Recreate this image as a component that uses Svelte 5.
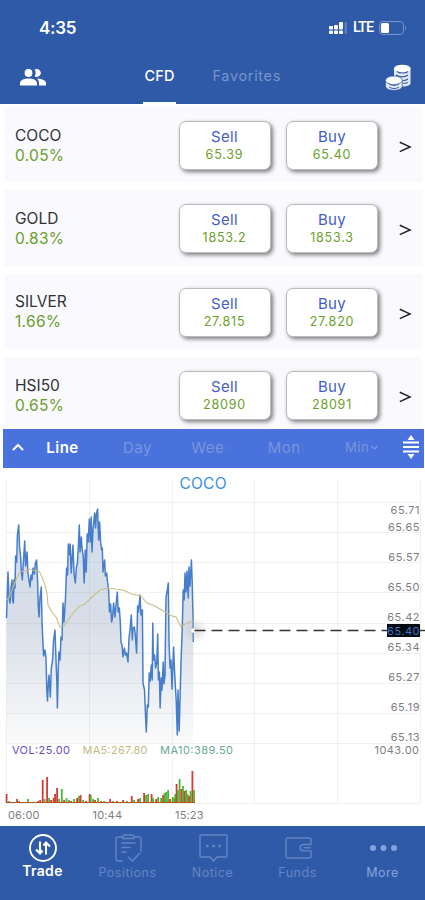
<script lang="ts">
  type Quote = { symbol: string; change: string; sell: string; buy: string };

  const quotes: Quote[] = [
    { symbol: 'COCO', change: '0.05%', sell: '65.39', buy: '65.40' },
    { symbol: 'GOLD', change: '0.83%', sell: '1853.2', buy: '1853.3' },
    { symbol: 'SILVER', change: '1.66%', sell: '27.815', buy: '27.820' },
    { symbol: 'HSI50', change: '0.65%', sell: '28090', buy: '28091' },
  ];

  const gridX = [6.5, 89.5, 172.5, 254.5, 337.5, 420.5];
  const gridY = [502.5, 532.5, 562.5, 592.5, 623.5, 653.5, 683.5, 713.5, 743.5, 803.5];

  const priceLabels = [
    { y: 513.5, text: '65.71' },
    { y: 530.5, text: '65.65' },
    { y: 560.5, text: '65.57' },
    { y: 590.5, text: '65.50' },
    { y: 620.5, text: '65.42' },
    { y: 650.5, text: '65.34' },
    { y: 680.5, text: '65.27' },
    { y: 710.5, text: '65.19' },
    { y: 740.5, text: '65.13' },
  ];

  const price =
    '6.5,618 8,572 9,598 10,603 11,588 12,580 12.6,600 13.4,603 14,580 15,588 15.6,556 16.7,562 17.4,535 18.7,525 19.6,548 20.6,556 21.4,572 22.3,580 23.5,560 24.7,541 25.6,566 27,552 28,574 29,580 30,587 31,575 32,580 33,568 34.4,574 35.4,563 36.6,560 37.6,582 38.3,606 39,617 40,598 41.3,587 42,622 42.8,640 43.6,656 45,650 46,658 46.8,690 47.5,701 48.3,684 49,675 50.3,697 51.3,668 52.5,661 53.6,640 55,630 56,660 56.8,680 57.4,708 58.2,672 58.9,652 60,660 61,637 62,640 63,603 64,622 65.4,600 66.6,568 67.6,575 68.3,544 69.6,555 70.2,544 71.2,573 72,560 73,545 74,574 75.3,583 76.3,568 77.4,563 78.4,545 79.3,525 80,552 81.3,537 82.2,550 83.2,556 84.2,583 85.2,550 86.2,572 87.2,534 88.2,542 89.3,519 90.3,542 91.2,517 92,552 93,530 94.6,513 95.6,528 96.4,514 97.6,509 98.6,540 99.6,522 100.6,542 101.6,550 102.3,548 103,572 104.6,560 105.4,576 106.6,573 107.8,584 108.6,590 109.5,612 110.6,604 111.6,622 112.5,618 113.6,603 115,617 116.2,603 117.3,592 118.2,612 119.3,608 120.3,622 121,642 122,645 123,657 124.4,648 125.4,655 126.6,653 128,662 129,638 130,630 131.3,615 132.3,640 133,628 134.3,627 135.2,634 136.6,653 137.6,606 138.6,612 140,595 141,615 142.4,610 143,683 144.5,690 145.5,715 146.3,732 147.3,705 148.3,707 149.2,673 150.2,681 151.3,665 152.2,680 152.8,623 153.4,660 154.6,655 155.6,668 156.8,662 157.7,634 158.4,680 159.4,672 160.1,708 161.2,678 162,690 163.2,662 164,684 165,675 166,597 167,592 168.3,583 169,640 170,668 171,660 172,689 173.6,647 174.4,668 175.4,687 176.2,700 177.3,735 178,690 179.2,731 180.2,692 181,663 182.2,630 183.2,590 184.2,600 185,573 186,592 187,571 188.2,598 189,567 190,586 191.4,560 192.2,582 193,615 193.3,642';

  const average =
    '7,600 9,598 12,590 16,580 20,572 25,571 30,569 35,571 39,571 42,577 45,585 47,593 48,605 52,612 56,617 60,627 64,626 68,620 74,612 80,606 85,604 92,597 100,590 108,588 115,589 123,590 132,594 141,596 147,603 153,605 160,609 167,613 172,616 176,617 181,627 187,623 193,621';

  // [x, height, up]
  const volume: [number, number, boolean][] = [
    [6.5, 9, false], [9, 2, true], [12, 1, true], [17, 4, false], [19, 2, true], [28, 4, true],
    [38, 2, false], [40, 3, false], [42.6, 23, false], [44.5, 4, true], [47, 26, false],
    [49, 5, true], [51, 3, false], [53.5, 5, false], [55, 9, false], [57, 15, false], [59, 4, true],
    [61.7, 14, true], [64, 3, false], [66.5, 5, true], [69, 3, true], [71, 2, false], [74, 4, true],
    [77, 5, false], [79, 7, true], [80.5, 8, false], [83, 3, true], [86, 2, false], [89.5, 9, false],
    [90.7, 8, true], [93, 4, true], [95, 3, false], [98, 5, true], [101, 2, false], [104, 2, true],
    [110, 4, false], [113, 2, true], [117, 2, false], [123, 3, false], [127, 2, true],
    [131.7, 7, false], [134, 3, true], [138, 4, false], [140, 5, true], [144, 10, false],
    [146, 8, true], [148, 9, true], [151.5, 9, false], [153, 5, true], [156, 4, false],
    [158, 6, true], [161, 5, true], [163, 8, false], [164.5, 10, true], [166, 11, true],
    [168, 13, true], [170, 4, false], [172.5, 6, true], [174, 5, true], [175.2, 9, true],
    [176.5, 19, false], [177.8, 13, true], [179.5, 24, true], [181.3, 14, false], [182.9, 17, true],
    [184.5, 12, false], [186, 13, true], [187.5, 9, true], [189, 7, false], [190.5, 12, true],
    [192.3, 32, false], [193.9, 13, true],
  ];
</script>

<div class="screen">
  <header>
    <div class="status">
      <span class="clock">4:35</span>
      <span class="signal">
        <svg width="20" height="14" viewBox="0 0 20 14" fill="#fff">
          <rect x="0" y="5" width="4" height="3.500" rx="1" />
          <rect x="5" y="4" width="4" height="4.500" rx="1" />
          <rect x="10" y="1" width="4" height="7.500" rx="1" />
          <rect x="15.500" y="1" width="2.500" height="12" rx="1" opacity=".2" />
          <rect x="0" y="9.500" width="4" height="3.500" rx="1" />
          <rect x="5" y="9.500" width="4" height="3.500" rx="1" />
          <rect x="10" y="9.500" width="4" height="3.500" rx="1" />
        </svg>
        <span class="lte">LTE</span>
        <svg width="28" height="14" viewBox="0 0 28 14">
          <rect x=".6" y=".6" width="23.800" height="12.800" rx="3" fill="none" stroke="#7e98cc" />
          <rect x="2" y="2" width="8" height="10" rx="1.500" fill="#fff" />
          <path d="M26 4.800q2 2.200 0 4.400z" fill="#7e98cc" />
        </svg>
      </span>
    </div>
    <div class="tabs">
      <svg class="people" width="26" height="17" viewBox="0 0 26 17" fill="#fff">
        <circle cx="8.500" cy="4" r="3.900" />
        <path d="M0 16.500v-2.200C0 11 5 9.600 8.600 9.600s8.400 1.400 8.400 4.700v2.200z" />
        <path d="M14.600 7.200a5.600 5.600 0 0 0 0-6.400A3.900 3.900 0 1 1 14.600 7.200z" />
        <path d="M17 9.600c4 .2 9 1.500 9 4.700v2.200h-7v-2.200c0-2-.8-3.500-2-4.700z" />
      </svg>
      <span class="tab active">CFD</span>
      <span class="tab">Favorites</span>
      <svg class="coins" width="27" height="27" viewBox="0 0 27 27">
        <path d="M9 5v14c0 2.500 3.500 3.500 8.500 3.500s8-1.300 8-3.500V5z" fill="#e4eaf6" />
        <ellipse cx="17.300" cy="4.500" rx="8.300" ry="3.800" fill="#fff" />
        <path d="M12 7.500c2 2 9 2 11 0M11 11c3 2.500 9 2.500 12 0M13 15c3 2 8 2 10 0M18 19c2 .4 4 .2 5-.6" fill="none" stroke="#2f5aa8" stroke-width="1.100" />
        <path d="M.5 16.500v5.500c0 2.800 3.800 4.300 8.400 4.300s8.400-1.500 8.400-4.300v-5.500z" fill="#e4eaf6" stroke="#2f5aa8" stroke-width=".7" />
        <ellipse cx="8.900" cy="16.300" rx="8.400" ry="4.300" fill="#fff" stroke="#2f5aa8" stroke-width=".7" />
        <path d="M3.500 19.500c2 2.400 9 2.400 11 0M4 23c3 2 7 2 10 0" fill="none" stroke="#2f5aa8" stroke-width="1" />
      </svg>
    </div>
  </header>

  <main>
    {#each quotes as quote}
      <div class="row">
        <div class="name">
          <span class="symbol">{quote.symbol}</span>
          <span class="change">{quote.change}</span>
        </div>
        <button><span class="side">Sell</span><span class="value">{quote.sell}</span></button>
        <button><span class="side">Buy</span><span class="value">{quote.buy}</span></button>
        <svg class="arrow" width="13" height="12" viewBox="0 0 13 12" fill="none" stroke="#222" stroke-width="1.500">
          <path d="M.8 1.200 11 5.900.8 10.600" />
        </svg>
      </div>
    {/each}
  </main>

  <div class="periods">
    <svg width="12" height="8" viewBox="0 0 12 8" fill="none" stroke="#fff" stroke-width="2"><path d="M1 7l5-5 5 5" /></svg>
    <span class="period on">Line</span>
    <span class="period">Day</span>
    <span class="period">Wee<i>k</i></span>
    <span class="period">Mon<i>t</i></span>
    <span class="period min">Min
      <svg width="7" height="5" viewBox="0 0 7 5" fill="none" stroke="#839fe0" stroke-width="1.200"><path d="M.5 1l3 3 3-3" /></svg>
    </span>
    <svg class="resize" width="16" height="24" viewBox="0 0 16 24" fill="#fff">
      <path d="M8 0l3.500 5h-7zM8 24l3.500-5h-7z" />
      <rect y="6.500" width="16" height="2" />
      <rect y="11" width="16" height="2" />
      <rect y="15.500" width="16" height="2" />
    </svg>
  </div>

  <svg class="chart" width="425" height="358" viewBox="0 468 425 358">
    <defs>
      <linearGradient id="area" gradientUnits="userSpaceOnUse" x1="0" y1="505" x2="0" y2="743">
        <stop offset="0" stop-color="#d2deed" />
        <stop offset=".5" stop-color="#d8dee8" />
        <stop offset="1" stop-color="#fbfbfb" />
      </linearGradient>
      <radialGradient id="halo">
        <stop offset="0" stop-color="#aaa" stop-opacity=".45" />
        <stop offset="1" stop-color="#ccc" stop-opacity=".1" />
      </radialGradient>
    </defs>

    <polygon points="6.5,743 {price} 193.3,743" fill="url(#area)" />
    <g stroke="#777" stroke-opacity=".1">
      {#each gridX as x}
        <line x1={x} x2={x} y1="480" y2="803" />
      {/each}
      {#each gridY as y}
        <line x1="6" x2="420" y1={y} y2={y} />
      {/each}
    </g>
    <polyline points={price} fill="none" stroke="#477ecb" stroke-width="1.500" stroke-linejoin="round" />
    <polyline points={average} fill="none" stroke="#c9bf86" stroke-width="1.100" />

    {#each volume as [x, h, up]}
      <rect x={x - 0.8} y={803 - h} width="1.8" height={h} fill={up ? '#4db531' : '#d83a35'} />
    {/each}
    <line x1="6" x2="195" y1="802.500" y2="802.500" stroke="#b05a20" />

    <circle cx="195" cy="630" r="12" fill="url(#halo)" />
    <circle cx="193.500" cy="630.500" r="2.300" fill="#fff" />
    <line x1="194.500" x2="387" y1="630.500" y2="630.500" stroke="#333" stroke-width="1.400" stroke-dasharray="11 6" />
    <line x1="420" x2="425" y1="630.500" y2="630.500" stroke="#333" stroke-width="1.400" />

    <text class="title" x="179.500" y="488.500" textLength="47">COCO</text>
    {#each priceLabels as label}
      <text class="axis" x="420" y={label.y} text-anchor="end">{label.text}</text>
    {/each}
    <rect x="387" y="624" width="33" height="13" fill="#050a12" />
    <text class="axis last" x="420" y="635" text-anchor="end">65.40</text>

    <text class="legend" x="12" y="754" textLength="58" fill="#6650c8">VOL:25.00</text>
    <text class="legend" x="82.500" y="754" textLength="65" fill="#c3bb86">MA5:267.80</text>
    <text class="legend" x="160" y="754" textLength="73" fill="#68aa93">MA10:389.50</text>
    <text class="axis" x="419.500" y="754" text-anchor="end" textLength="45">1043.00</text>

    <text class="axis" x="8" y="819" textLength="32">06:00</text>
    <text class="axis" x="92.500" y="819" textLength="30">10:44</text>
    <text class="axis" x="175" y="819" textLength="29">15:23</text>
  </svg>

  <nav>
    <div class="item current">
      <svg width="30" height="30" viewBox="0 0 30 30" fill="none" stroke="currentColor" stroke-width="1.900">
        <circle cx="15" cy="15" r="13" />
        <path d="M12 8.500v12M8 16.500l4 4 2.500-3M18 21.500v-12M22 13.500l-4-4-2.500 3" stroke-width="2.100" />
      </svg>
      <span>Trade</span>
    </div>
    <div class="item">
      <svg width="30" height="30" viewBox="0 0 30 30" fill="none" stroke="currentColor" stroke-width="1.400">
        <path d="M10 4H5a2 2 0 0 0-2 2v20a2 2 0 0 0 2 2h5M21 4h5a2 2 0 0 1 2 2v13" />
        <path d="M10 5.500h11V3.500A1.500 1.500 0 0 0 19.500 2h-8A1.500 1.500 0 0 0 10 3.500zM8.500 10h14M8.500 14.500h9M8.500 19h5M15 24l4.500 4 7.500-8" />
      </svg>
      <span>Positions</span>
    </div>
    <div class="item">
      <svg width="30" height="30" viewBox="0 0 30 30" fill="none" stroke="currentColor" stroke-width="1.400">
        <path d="M3 2h25a1 1 0 0 1 1 1v20a1 1 0 0 1-1 1h-9l-3.500 4-3.500-4H3a1 1 0 0 1-1-1V3a1 1 0 0 1 1-1z" />
        <path d="M8 13h2.600M14.200 13h2.600M20.400 13h2.600" stroke-width="2.600" />
      </svg>
      <span>Notice</span>
    </div>
    <div class="item">
      <svg width="30" height="30" viewBox="0 0 30 30" fill="none" stroke="currentColor" stroke-width="1.400">
        <path d="M28 11V6.500A1.500 1.500 0 0 0 26.500 5H5a2 2 0 0 0-2 2v16a2 2 0 0 0 2 2h21.500a1.500 1.500 0 0 0 1.500-1.500V18" />
        <path d="M28.500 11.500H20.500a3.200 3.200 0 0 0 0 6.400h8M20.500 14.700h7.500" />
      </svg>
      <span>Funds</span>
    </div>
    <div class="item">
      <svg width="30" height="30" viewBox="0 0 30 30" fill="currentColor">
        <circle cx="5" cy="15" r="3" />
        <circle cx="15.500" cy="15" r="3" />
        <circle cx="26" cy="15" r="3" />
      </svg>
      <span>More</span>
    </div>
  </nav>
</div>

<style>
  :global(body) {
    margin: 0;
    background: #fff;
  }
  .screen {
    width: 425px;
    height: 900px;
    display: flex;
    flex-direction: column;
    overflow: hidden;
    font-family: Inter, Roboto, sans-serif;
  }
  svg {
    display: block;
    flex: none;
  }
  header {
    flex: none;
    height: 104px;
    background: #2f5aa8;
    color: #fff;
  }
  .status {
    height: 55px;
    display: flex;
    justify-content: space-between;
    align-items: center;
    padding: 0 18px 0 39px;
    box-sizing: border-box;
  }
  .clock {
    font-size: 17px;
    font-weight: 600;
    letter-spacing: -0.3px;
  }
  .signal {
    display: flex;
    align-items: center;
    gap: 4px;
  }
  .lte {
    width: 22px;
    font: 500 14.5px Roboto, sans-serif;
    line-height: 16px;
    letter-spacing: -1px;
    padding-top: 1px;
  }
  .tabs {
    height: 49px;
    display: flex;
    padding: 0 13px 0 20px;
  }
  .people {
    margin-top: 13.5px;
    margin-right: 97px;
  }
  .tab {
    font-size: 14.5px;
    line-height: 42px;
    height: 47px;
    margin-right: 36.5px;
    color: #7895cd;
    letter-spacing: 0.65px;
  }
  .active {
    color: #fff;
    font-weight: 500;
    letter-spacing: 0.2px;
    width: 33px;
    border-bottom: 2px solid #fff;
    text-align: center;
  }
  .coins {
    margin-top: 9px;
    margin-left: auto;
  }
  main {
    flex: none;
    height: 322px;
    padding: 3px 3px 0 4px;
    display: flex;
    flex-direction: column;
    gap: 8px;
    overflow: hidden;
  }
  .row {
    flex: none;
    height: 75.4px;
    box-sizing: border-box;
    padding: 14px 0 0 11px;
    background: #f9f9fe;
    display: flex;
  }
  .name {
    width: 163.5px;
    display: flex;
    flex-direction: column;
    padding-top: 4.5px;
    font-size: 15.5px;
    line-height: 20px;
  }
  .symbol {
    color: #333;
    letter-spacing: 0;
  }
  .change {
    color: #699f2b;
    letter-spacing: 0.3px;
  }
  button {
    width: 92px;
    height: 49px;
    margin: 0 15.5px 0 0;
    padding: 0;
    border: 1px solid #bbb;
    border-radius: 7px;
    background: #fff;
    box-shadow: 2px 2px 4px rgba(0, 0, 0, 0.5);
    display: flex;
    flex-direction: column;
    align-items: center;
    font-family: inherit;
  }
  .side {
    font-size: 15px;
    line-height: 18px;
    margin-top: 6px;
    color: #4260c4;
    letter-spacing: 0.3px;
  }
  .value {
    font-size: 12.5px;
    line-height: 17px;
    color: #699f2b;
    letter-spacing: 0.8px;
  }
  .arrow {
    margin: 20px 0 0 5px;
  }
  .periods {
    flex: none;
    height: 39px;
    margin: 0 1px 0 3px;
    padding: 0 5px 3px 9px;
    box-sizing: border-box;
    background: #4972dc;
    display: flex;
    align-items: center;
  }
  .period {
    width: 75px;
    margin-right: -0.3px;
    text-align: center;
    font-size: 15px;
    color: #7b95dd;
    letter-spacing: 0.5px;
  }
  .period i {
    font-style: normal;
    opacity: 0.15;
  }
  .on {
    margin: 0 0 0 1px;
    color: #fff;
    font-weight: 600;
  }
  .min {
    font-size: 13px;
    display: flex;
    justify-content: center;
    align-items: center;
    gap: 2px;
  }
  .resize {
    margin-left: auto;
  }
  .chart {
    background: #fff;
    font-family: Inter, Roboto, sans-serif;
  }
  .title {
    font-size: 15.5px;
    fill: #3a90e8;
  }
  .axis {
    font-size: 11px;
    fill: #7e7e84;
    letter-spacing: 0.5px;
  }
  .last {
    fill: #3d73c4;
  }
  .legend {
    font-size: 11px;
  }
  nav {
    flex: none;
    height: 74px;
    background: #2f5aa8;
    color: #6585c4;
    display: flex;
  }
  .item {
    width: 85px;
    display: flex;
    flex-direction: column;
    align-items: center;
    padding-top: 7px;
  }
  .item span {
    font-size: 12.5px;
    line-height: 20px;
    letter-spacing: 0.5px;
  }
  .item:last-child {
    color: #86a2dc;
  }
  .current {
    color: #fff;
  }
  .item.current span {
    font-size: 14px;
    line-height: 16px;
    font-weight: 600;
    letter-spacing: 0.3px;
  }
</style>
